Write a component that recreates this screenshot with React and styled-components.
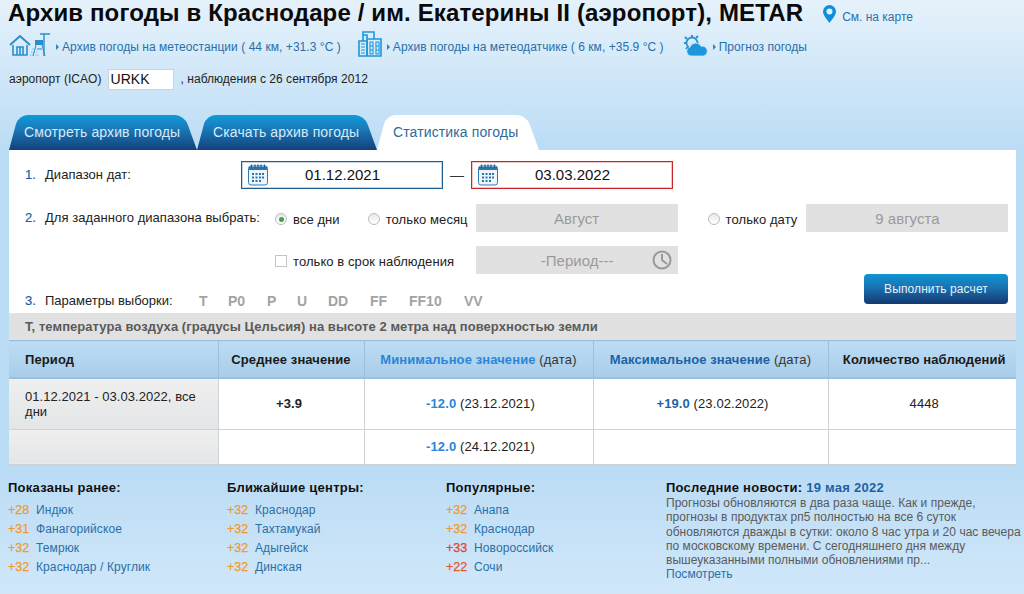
import React from "react";
import styled, { createGlobalStyle } from "styled-components";

const Global = createGlobalStyle`
  html, body { margin: 0; padding: 0; }
  body {
    width: 1024px; height: 594px; overflow: hidden;
    font-family: "Liberation Sans", Arial, sans-serif;
    font-size: 12px; color: #222;
  }
`;

const Page = styled.div`
  width: 1024px; height: 594px; overflow: hidden;
  background: linear-gradient(#e6f2fb 0, #bbdcf5 150px, #bbdcf5 470px, #d0e7f9 594px);
`;
const Header = styled.header`
  height: 115px; padding-left: 8px; box-sizing: border-box;
`;
const TitleRow = styled.div`
  display: flex; align-items: flex-start; height: 31px;
`;
const Title = styled.h1`
  margin: 0; font-size: 24px; line-height: 25px; font-weight: 700; color: #0a0a0a; white-space: nowrap; letter-spacing: .13px;
`;
const MapLink = styled.a`
  display: flex; align-items: flex-start; gap: 6px; margin: 5px 0 0 20px;
  font-size: 12px; color: #2a72ad;
`;
const MapText = styled.span`
  margin-top: 5px; line-height: 14px; white-space: nowrap;
`;
const LinkRow = styled.div`
  display: flex; align-items: flex-start; height: 26px; padding-left: 1px;
`;
const IconSlot = styled.span`
  display: flex; flex: none; margin-top: ${p => p.$top || 0}px;
`;
const LinkItem = styled.a`
  display: flex; align-items: center; color: #2a6fa8; font-size: 12px; line-height: 14px; white-space: nowrap; letter-spacing: .05px;
  margin: 9px ${p => p.$gap || 0}px 0 0;
`;
const Arrow = styled.span`
  display: inline-block; width: 0; height: 0; margin: 0 3px 0 ${p => p.$left || 5}px;
  border-left: 3px solid #2a86c5; border-top: 3px solid transparent; border-bottom: 3px solid transparent;
`;
const StationRow = styled.div`
  display: flex; align-items: center; height: 22px; margin-top: 11px; padding-left: 1px; color: #222; font-size: 12px; letter-spacing: .04px;
`;
const CodeInput = styled.div`
  width: 66px; height: 21px; margin: 0 7px 0 6px; box-sizing: border-box; border: 1px solid #c9d3da;
  background: #fff; font-size: 14px; line-height: 19px; padding-left: 2px; color: #111;
`;
const Tabs = styled.nav`
  display: flex; gap: 1px; height: 35px; margin-left: 9px;
`;
const Tab = styled.a`
  position: relative; isolation: isolate; display: flex; align-items: center; box-sizing: border-box;
  width: ${p => p.$w}px; padding: 0 0 2px ${p => p.$pad}px; font-size: 14px; white-space: nowrap; letter-spacing: .12px;
  color: ${p => (p.$active ? "#2f6b9a" : "#d4ebfb")};
  &::before, &::after {
    content: ""; position: absolute; top: 0; bottom: 0; z-index: -1;
    background: ${p => (p.$active ? "#fff" : "linear-gradient(#0f9cd8 0, #1a78b8 40%, #15548f 80%, #123f80 100%)")};
  }
  &::before {
    left: 0; right: 50%; border-top-left-radius: 9px;
    transform-origin: bottom left; transform: skewX(-15deg);
  }
  &::after {
    left: 50%; right: 0; border-top-right-radius: 9px;
    transform-origin: bottom right; transform: skewX(20deg);
  }
`;
const Panel = styled.main`
  margin: 0 8px 0 9px; height: 315px; background: #fff;
  display: flex; flex-direction: column;
`;
const Form = styled.div`
  height: 163px; padding: 11px 8px 0 16px; box-sizing: border-box;
  display: flex; flex-direction: column;
`;
const FormRow = styled.div`
  display: flex; align-items: ${p => p.$align || "center"}; height: ${p => p.$h}px; margin-top: ${p => p.$top || 0}px;
  font-size: 13px; color: #222; white-space: nowrap;
`;
const Num = styled.span`
  width: 20px; color: #1b62a3; flex: none; padding-bottom: 2px; -webkit-text-stroke: .2px #1b62a3;
`;
const Label = styled.span`
  width: ${p => p.$w}px; flex: none; letter-spacing: .05px; padding-bottom: 2px;
`;
const DateBox = styled.div`
  width: 202px; height: 28px; box-sizing: border-box; border: 1px solid ${p => p.$color};
  box-shadow: inset 0 0 0 1px ${p => p.$color}44;
  display: flex; align-items: center; padding-left: 6px; font-size: 15px; color: #111; background: #fff;
`;
const DateText = styled.span`
  flex: 1; text-align: center; padding: 0 25px 1px 0;
`;
const Dash = styled.span`
  width: 28px; text-align: center; font-size: 14px; color: #333;
`;
const Radio = styled.span`
  width: 12px; height: 12px; box-sizing: border-box; border: 1px solid #b5bdc2; border-radius: 50%; flex: none;
  margin: 2px 6px 0 ${p => p.$left || 0}px; display: flex; align-items: center; justify-content: center;
  background: linear-gradient(#e6e9eb, #fff);
  &::after { content: ""; width: 5px; height: 5px; border-radius: 50%; background: ${p => (p.$on ? "#3ea63e" : "transparent")}; }
`;
const Check = styled.span`
  width: 12px; height: 12px; box-sizing: border-box; border: 1px solid #bfc5c9; flex: none; margin: 2px 6px 0 0;
`;
const OptText = styled.span`
  font-size: 13px; color: #222; margin-top: 2px; letter-spacing: .08px;
`;
const GreySelect = styled.div`
  width: 202px; height: 28px; background: #e1e1e1; color: #9a9a9a; font-size: 15px; flex: none;
  display: flex; align-items: center; justify-content: center; position: relative; margin-left: ${p => p.$left || 0}px;
  box-sizing: border-box;
`;
const ClockWrap = styled.span`
  position: absolute; right: 6px; top: 4px; display: flex;
`;
const Params = styled.div`
  display: flex; color: #a3a3a3; font-size: 14px; font-weight: 700; align-self: flex-end; margin-bottom: 4px;
`;
const Param = styled.span`
  width: ${p => p.$w}px;
`;
const ParamLabel = styled.span`
  width: 154px; flex: none; font-size: 13px; align-self: flex-end; margin-bottom: 5px; color: #222;
`;
const ParamNum = styled(Num)`
  align-self: flex-end; margin-bottom: 3px;
`;
const RunButton = styled.button`
  margin-left: auto; width: 144px; height: 30px; border: 0; border-radius: 4px; padding: 0;
  background: linear-gradient(#0f96d2 0, #1a72b2 45%, #14386f 100%);
  color: #e3f2fb; font: 12px "Liberation Sans", Arial, sans-serif; letter-spacing: .1px; align-self: flex-start;
`;
const Band = styled.div`
  height: 27px; background: #e1e1e1; padding-left: 16px; line-height: 27px;
  font-size: 13px; letter-spacing: .06px; font-weight: 700; color: #5a5a5a; white-space: nowrap;
`;
const Table = styled.table`
  width: 1007px; border-collapse: collapse; table-layout: fixed; font-size: 13px;
`;
const Th = styled.th`
  height: 36px; padding: 0 0 0 ${p => p.$pad || 0}px; text-align: ${p => p.$left ? "left" : "center"};
  background: linear-gradient(#bcdcf4, #a9cde9); font-size: 13px; font-weight: 700; color: #1a1a1a; letter-spacing: .1px;
  border: 2px solid #9dbfd9; border-width: 1px 1px 2px 1px; white-space: nowrap;
  &:first-child { border-left: 0; } &:last-child { border-right: 0; }
`;
const Normal = styled.span`
  font-weight: 400; color: #333; font-size: 13px; letter-spacing: .2px;
`;
const Accent = styled.span`
  color: ${p => p.$c};
`;
const Td = styled.td`
  height: ${p => p.$h}px; padding: ${p => (p.$bold ? "0 13px 0 9px" : "0 8px 0 12px")}; box-sizing: border-box; text-align: center; color: #222; letter-spacing: .1px;
  border: 1px solid #cdd3d7; font-weight: ${p => (p.$bold ? 700 : 400)};
  &:last-child { border-right: 0; } &:first-child { border-left: 0; }
`;
const PeriodTd = styled(Td)`
  text-align: left; padding: 0 12px 0 16px; line-height: 15px; letter-spacing: .05px;
  background: linear-gradient(#efefef, #e3e5e7);
`;
const BottomCellRow = styled.tr`
  & > td { border-bottom: 2px solid #cdd3d7; }
`;
const Footer = styled.footer`
  display: grid; grid-template-columns: 219px 219px 220px 358px; padding: 15px 0 0 8px;
`;
const ColTitle = styled.div`
  font-size: 13px; font-weight: 700; color: #111; line-height: 16px; margin-bottom: ${p => p.$mb ?? 5}px; letter-spacing: .25px; white-space: nowrap;
`;
const City = styled.div`
  display: flex; height: 19px; line-height: 19px; font-size: 12px; letter-spacing: .1px;
`;
const Temp = styled.span`
  width: 28px; color: ${p => p.$c}; flex: none; font-size: 12.5px; letter-spacing: 0; -webkit-text-stroke: .25px ${p => p.$c};
`;
const CityName = styled.a`
  color: #2a6fa8;
`;
const NewsText = styled.div`
  font-size: 12px; line-height: 14.27px; color: #5a5a5a; white-space: nowrap; letter-spacing: .03px;
`;

const HouseIcon = () => (
  <svg width="41" height="26" viewBox="0 0 41 26" fill="none" stroke="#2690cf" strokeWidth="1.6">
    <path d="M1 13 L11 4 L21 13" strokeWidth="2" />
    <path d="M4 13 V23 H18 V13" />
    <path d="M8 23 V15 H11 V23 M11 15 H14 V23" />
    <path d="M22 20h7M21 23h10M23 17h4" strokeWidth="1" stroke="#7fc0e6" strokeDasharray="1.5 1" />
    <path d="M26 13 H34 V8 H26 Z" fill="#2690cf" stroke="none" />
    <path d="M27 13 L24 24 M33 13 L36 24 M28 17 H33" strokeWidth="1" />
    <path d="M35 24 V2 M31 2 H41" strokeWidth="1.4" />
  </svg>
);
const BuildingIcon = () => (
  <svg width="24" height="26" viewBox="0 0 24 26" fill="none" stroke="#2096d8" strokeWidth="1.6">
    <path d="M1 25 V10 H9 V25 Z" />
    <path d="M9 25 V4 H5 V10 M5 4 V1 H16 V8" />
    <path d="M9 8 H23 V25 H9" />
    <path d="M3 13 H7 M3 16 H7 M3 19 H7 M3 22 H7 M12 11 H15 V23 H12 Z M12 15 H15 M12 19 H15 M18 11 H21 V23 H18 Z M18 15 H21 M18 19 H21" strokeWidth="1.1" />
  </svg>
);
const CloudIcon = () => (
  <svg width="24" height="22" viewBox="0 0 24 22">
    <circle cx="8" cy="8" r="5.5" fill="none" stroke="#2794d4" strokeWidth="1.8" />
    <path d="M8 0v2M1 2l2 2M0 8h2M14 1l-2 2M2 14l2-2" stroke="#2794d4" strokeWidth="2" />
    <path d="M7 21 a4.5 4.5 0 0 1 -1 -8.8 a6 6 0 0 1 11 -1 a5 5 0 0 1 2.500 9.800 Z" fill="#1e96dc" stroke="#d4e8f8" strokeWidth="0.8" />
  </svg>
);
const PinIcon = () => (
  <svg width="13" height="18" viewBox="0 0 13 18">
    <path fillRule="evenodd" d="M6.500 0 A6.500 6.500 0 0 1 13 6.500 C13 10.500 8.500 15 6.500 18 C4.500 15 0 10.500 0 6.500 A6.500 6.500 0 0 1 6.500 0 Z M6.500 3.500 A3 3 0 1 0 6.500 9.500 A3 3 0 1 0 6.500 3.500 Z" fill="#0e8fd6" />
  </svg>
);
const CalendarIcon = () => (
  <svg width="20" height="22" viewBox="0 0 20 22">
    <rect x="0.500" y="2" width="19" height="19" rx="2.500" fill="#eef6fc" stroke="#2d7ab5" />
    <path d="M1 3 h18 v3 H1 Z" fill="#2d74ad" />
    <path d="M3.500 0.500v3M7 0.500v3M10 0.500v3M13 0.500v3M16.500 0.500v3" stroke="#1c5d93" strokeWidth="1.300" />
    <path d="M4 9h2v2H4ZM7.500 9h2v2h-2ZM11 9h2v2h-2ZM14 9h2v2h-2ZM4 12.500h2v2H4ZM7.500 12.500h2v2h-2ZM11 12.500h2v2h-2ZM14 12.500h2v2h-2ZM7.500 16h2v2h-2ZM11 16h2v2h-2ZM4 16h2v2H4Z" fill="#2d74ad" />
  </svg>
);
const ClockIcon = () => (
  <svg width="20" height="20" viewBox="0 0 20 20" fill="none" stroke="#999" strokeWidth="2">
    <circle cx="10" cy="10" r="8.500" />
    <path d="M10 4 V10 L15 14" />
  </svg>
);

const cols = [
  { title: "Показаны ранее:", rows: [["+28", "Индюк"], ["+31", "Фанагорийское"], ["+32", "Темрюк"], ["+32", "Краснодар / Круглик"]] },
  { title: "Ближайшие центры:", rows: [["+32", "Краснодар"], ["+32", "Тахтамукай"], ["+32", "Адыгейск"], ["+32", "Динская"]] },
  { title: "Популярные:", rows: [["+32", "Анапа"], ["+32", "Краснодар"], ["+33", "Новороссийск", "#e0432f"], ["+22", "Сочи", "#e8562a"]] },
];

export default function App() {
  return (
    <Page>
      <Global />
      <Header>
        <TitleRow>
          <Title>Архив погоды в Краснодаре / им. Екатерины II (аэропорт), METAR</Title>
          <MapLink><PinIcon /><MapText>См. на карте</MapText></MapLink>
        </TitleRow>
        <LinkRow>
          <IconSlot $top={1}><HouseIcon /></IconSlot>
          <LinkItem $gap={17}><Arrow $left={6} />Архив погоды на метеостанции ( 44 км, +31.3 °C )</LinkItem>
          <IconSlot><BuildingIcon /></IconSlot>
          <LinkItem $gap={20}><Arrow />Архив погоды на метеодатчике ( 6 км, +35.9 °C )</LinkItem>
          <IconSlot $top={4}><CloudIcon /></IconSlot>
          <LinkItem><Arrow />Прогноз погоды</LinkItem>
        </LinkRow>
        <StationRow>
          аэропорт (ICAO)
          <CodeInput>URKK</CodeInput>
          , наблюдения с 26 сентября 2012
        </StationRow>
      </Header>
      <Tabs>
        <Tab $w={187} $pad={15}>Смотреть архив погоды</Tab>
        <Tab $w={179} $pad={16}>Скачать архив погоды</Tab>
        <Tab $w={161} $pad={16} $active>Статистика погоды</Tab>
      </Tabs>
      <Panel>
        <Form>
          <FormRow $h={28}>
            <Num>1.</Num>
            <Label $w={196}>Диапазон дат:</Label>
            <DateBox $color="#1d5f94"><CalendarIcon /><DateText>01.12.2021</DateText></DateBox>
            <Dash>—</Dash>
            <DateBox $color="#c9252b"><CalendarIcon /><DateText>03.03.2022</DateText></DateBox>
          </FormRow>
          <FormRow $h={28} $top={15}>
            <Num>2.</Num>
            <Label $w={230}>Для заданного диапазона выбрать:</Label>
            <Radio $on />
            <OptText>все дни</OptText>
            <Radio $left={28} />
            <OptText>только месяц</OptText>
            <GreySelect $left={8}>Август</GreySelect>
            <Radio $left={30} />
            <OptText>только дату</OptText>
            <GreySelect $left={9}>9 августа</GreySelect>
          </FormRow>
          <FormRow $h={28} $top={14}>
            <Label $w={250} />
            <Check />
            <OptText>только в срок наблюдения</OptText>
            <GreySelect $left={22}>-Период---<ClockWrap><ClockIcon /></ClockWrap></GreySelect>
          </FormRow>
          <FormRow $h={39} $align="stretch">
            <ParamNum>3.</ParamNum>
            <ParamLabel>Параметры выборки:</ParamLabel>
            <Params>
              <Param $w={29}>T</Param>
              <Param $w={39}>P0</Param>
              <Param $w={30}>P</Param>
              <Param $w={31}>U</Param>
              <Param $w={42}>DD</Param>
              <Param $w={39}>FF</Param>
              <Param $w={55}>FF10</Param>
              <Param $w={30}>VV</Param>
            </Params>
            <RunButton>Выполнить расчет</RunButton>
          </FormRow>
        </Form>
        <Band>T, температура воздуха (градусы Цельсия) на высоте 2 метра над поверхностью земли</Band>
        <Table>
          <colgroup>
            <col style={{ width: 209 }} /><col style={{ width: 146 }} /><col style={{ width: 229 }} /><col style={{ width: 235 }} /><col style={{ width: 188 }} />
          </colgroup>
          <thead>
            <tr>
              <Th $left $pad={16}>Период</Th>
              <Th>Среднее значение</Th>
              <Th><Accent $c="#2a86d8">Минимальное значение</Accent> <Normal>(дата)</Normal></Th>
              <Th><Accent $c="#1c62a8">Максимальное значение</Accent> <Normal>(дата)</Normal></Th>
              <Th $pad={4}>Количество наблюдений</Th>
            </tr>
          </thead>
          <tbody>
            <tr>
              <PeriodTd $h={51}>01.12.2021 - 03.03.2022, все дни</PeriodTd>
              <Td $h={51} $bold>+3.9</Td>
              <Td $h={51}><Accent $c="#2a86d8"><b>-12.0</b></Accent> (23.12.2021)</Td>
              <Td $h={51}><Accent $c="#1c62a8"><b>+19.0</b></Accent> (23.02.2022)</Td>
              <Td $h={51}>4448</Td>
            </tr>
            <BottomCellRow>
              <PeriodTd $h={36} />
              <Td $h={36} />
              <Td $h={36}><Accent $c="#2a86d8"><b>-12.0</b></Accent> (24.12.2021)</Td>
              <Td $h={36} />
              <Td $h={36} />
            </BottomCellRow>
          </tbody>
        </Table>
      </Panel>
      <Footer>
        {cols.map(col => (
          <div key={col.title}>
            <ColTitle>{col.title}</ColTitle>
            {col.rows.map(([t, name, c]) => (
              <City key={name}><Temp $c={c || "#f09a2c"}>{t}</Temp><CityName>{name}</CityName></City>
            ))}
          </div>
        ))}
        <div>
          <ColTitle $mb={0}>Последние новости: <Accent $c="#1c62a8">19 мая 2022</Accent></ColTitle>
          <NewsText>
            Прогнозы обновляются в два раза чаще. Как и прежде,<br />
            прогнозы в продуктах рп5 полностью на все 6 суток<br />
            обновляются дважды в сутки: около 8 час утра и 20 час вечера<br />
            по московскому времени. С сегодняшнего дня между<br />
            вышеуказанными полными обновлениями пр...<br />
            <CityName>Посмотреть</CityName>
          </NewsText>
        </div>
      </Footer>
    </Page>
  );
}
